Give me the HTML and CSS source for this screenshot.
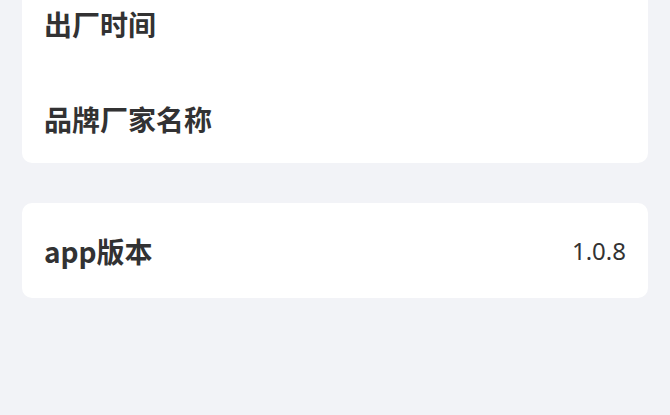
FILE: index.html
```html
<!DOCTYPE html>
<html lang="zh-CN">

<head>
    <meta charset="UTF-8">
    <meta name="viewport" content="width=device-width, initial-scale=1.0">
    <title>设备信息</title>
    <link rel="stylesheet" href="styles.css">
</head>

<body>
    <div class="page">
        <div class="card card-scrolled">
            <div class="cell">
                <span class="cell-title">出厂时间</span>
                <span class="cell-value"></span>
            </div>
            <div class="cell">
                <span class="cell-title">品牌厂家名称</span>
                <span class="cell-value"></span>
            </div>
        </div>

        <div class="card">
            <div class="cell cell-single">
                <span class="cell-title">app版本</span>
                <span class="cell-value">1.0.8</span>
            </div>
        </div>
    </div>
</body>

</html>
```

FILE: styles.css
```css
body {
    font-family: "Noto Sans", "Noto Sans CJK SC", sans-serif;
    background-color: #f2f3f7;
    margin: 0;
    padding: 0;
    height: 100vh;
    overflow: hidden;
}

.page {
    padding: 0 22px;
    display: flex;
    flex-direction: column;
    gap: 40px;
}

.card {
    background-color: #fff;
    border-radius: 10px;
    overflow: hidden;
}

/* page is scrolled, top of the first card is out of view */
.card-scrolled {
    margin-top: -27px;
}

.cell {
    height: 95px;
    box-sizing: border-box;
    padding: 6px 22px 0 22px;
    display: flex;
    align-items: center;
    justify-content: space-between;
}

.cell-single {
    padding-top: 0;
}

.cell-title {
    font-family: "Noto Sans CJK SC", sans-serif;
    font-size: 28px;
    font-weight: 700;
    color: #323233;
}

.cell-value {
    font-size: 24px;
    color: #333;
}
```
